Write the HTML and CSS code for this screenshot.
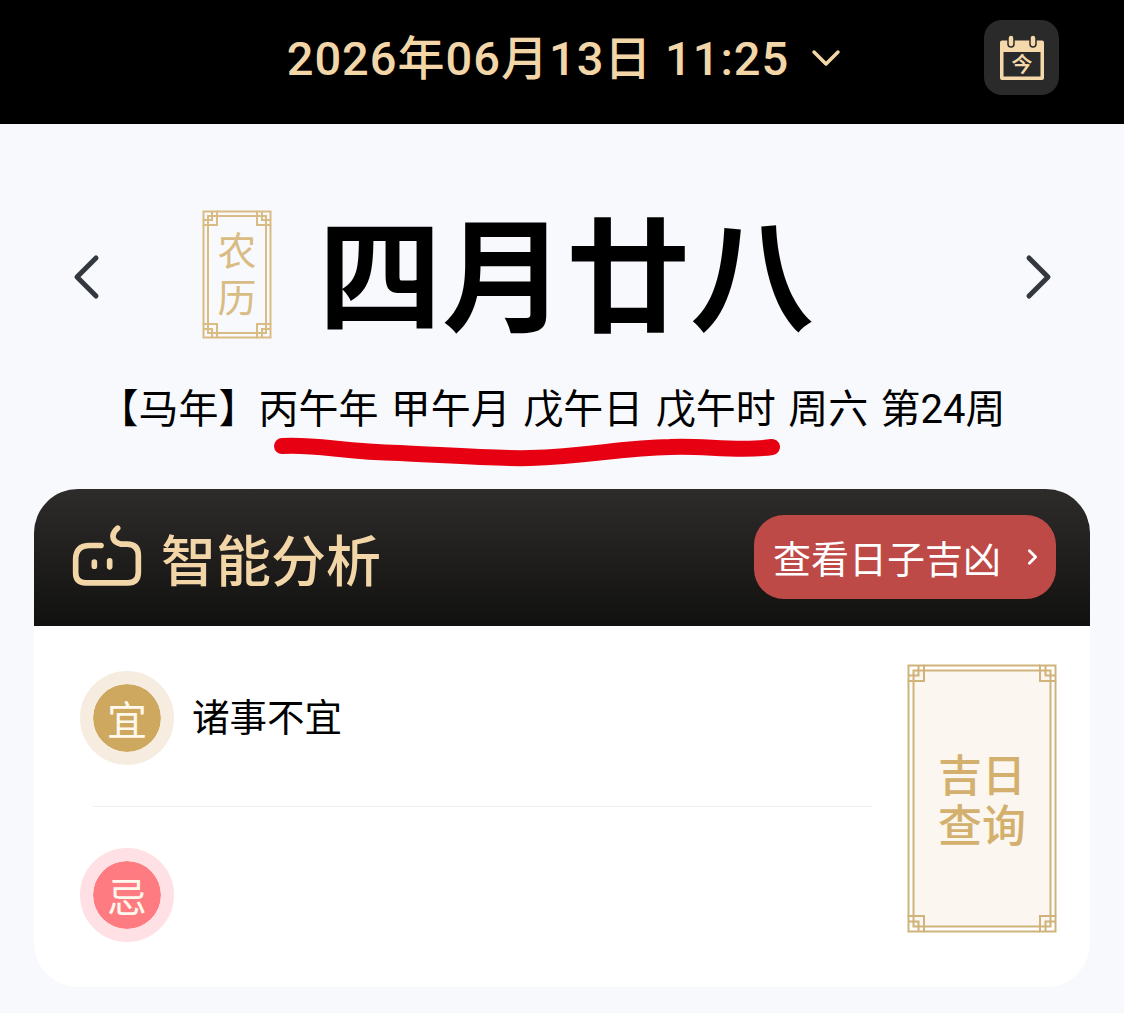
FILE: index.html
```html
<!DOCTYPE html>
<html lang="zh-CN">
<head>
  <meta charset="UTF-8">
  <title>智能分析</title>
  <link rel="stylesheet" href="styles.css">
</head>
<body>
<svg class="defs" width="0" height="0">
  <defs>
    <g id="knot-big">
      <rect x="1.500" y="1.500" width="15.500" height="15.500"/>
      <path d="M1.500 11.500H11.500V1.500"/>
      <path d="M6.500 17V6.500H17"/>
    </g>
    <g id="knot-small">
      <rect x="1.500" y="1.500" width="13.500" height="13.500"/>
      <path d="M1.500 10H10V1.500"/>
      <path d="M6 15V6H15"/>
    </g>
  </defs>
</svg>

<header class="top-bar">
  <div></div>
  <div class="date-picker">
    <span class="date-text">2026年06月13日 11:25</span>
    <svg class="date-chevron" viewBox="0 0 30 18"><path d="M3 3L15 15L27 3"/></svg>
  </div>
  <div class="today-wrap">
    <button class="today-btn">
      <svg width="46" height="46" viewBox="0 0 46 46">
        <path class="cal-fill" d="M3 5.500h40a2 2 0 0 1 2 2V43a2 2 0 0 1-2 2H3a2 2 0 0 1-2-2V7.500a2 2 0 0 1 2-2zM4.500 17V41.500H41.500V17z"/>
        <rect class="cal-ring" x="9" y="0" width="6" height="12" rx="3"/>
        <rect class="cal-ring" x="31" y="0" width="6" height="12" rx="3"/>
        <text class="cal-text" x="23" y="37" text-anchor="middle">今</text>
      </svg>
    </button>
  </div>
</header>

<main class="hero">
  <div class="hero-row">
    <svg class="arrow" viewBox="0 0 30 46"><path d="M24 4L5 23L24 42"/></svg>
    <div class="lunar-tag">
      <svg class="frame" width="70" height="129" viewBox="0 0 70 129">
        <use href="#knot-small"/>
        <use href="#knot-small" transform="translate(70 0) scale(-1 1)"/>
        <use href="#knot-small" transform="translate(0 129) scale(1 -1)"/>
        <use href="#knot-small" transform="translate(70 129) scale(-1 -1)"/>
        <path d="M15 1.500H55M15 6H55M15 127.500H55M15 123H55M1.500 15V114M6 15V114M68.500 15V114M64 15V114"/>
      </svg>
      <span>农<br>历</span>
    </div>
    <h1 class="lunar-date">四月廿八</h1>
    <svg class="arrow arrow-next" viewBox="0 0 30 46"><path d="M5 4L24 23L5 42"/></svg>
  </div>

  <div class="ganzhi">
    <p>【马年】丙午年 甲午月 戊午日 戊午时 周六 第24周</p>
    <svg class="scribble" width="520" height="40" viewBox="0 0 520 40">
      <path d="M12 13C50 11 70 19 130 20C190 23 230 26 260 25C320 23 350 15 400 14C430 12 470 19 502 14"/>
    </svg>
  </div>

  <section class="card">
    <div class="card-head">
      <svg class="robot" width="70" height="62" viewBox="125 115 210 185">
        <path d="M212 176H178Q136 176 136 218V258Q136 288 166 288H292Q324 288 324 256V206Q324 172 290 172H272Q246 166 248 146Q250 134 262 124"/>
        <path d="M192 226V238M238 222V240"/>
      </svg>
      <h2>智能分析</h2>
      <a class="lucky-btn">查看日子吉凶<svg width="14" height="22" viewBox="0 0 14 22"><path d="M3 3L11 11L3 19"/></svg></a>
    </div>
    <div class="card-body">
      <div class="advice">
        <div class="advice-row">
          <span class="badge badge-yi">宜</span>
          <span class="advice-text">诸事不宜</span>
        </div>
        <hr class="divider">
        <div class="advice-row">
          <span class="badge badge-ji">忌</span>
        </div>
      </div>
      <div class="lucky-tag">
        <svg class="frame" width="150" height="269" viewBox="0 0 150 269">
          <use href="#knot-big"/>
          <use href="#knot-big" transform="translate(150 0) scale(-1 1)"/>
          <use href="#knot-big" transform="translate(0 269) scale(1 -1)"/>
          <use href="#knot-big" transform="translate(150 269) scale(-1 -1)"/>
          <path d="M17 1.500H133M17 6.500H133M17 267.500H133M17 262.500H133M1.500 17V252M6.500 17V252M148.500 17V252M143.500 17V252"/>
        </svg>
        <span>吉日<br>查询</span>
      </div>
    </div>
  </section>
</main>
</body>
</html>
```

FILE: styles.css
```css
* {
  box-sizing: border-box;
}

body {
  margin: 0;
  background-color: #F8F9FC;
  font-family: "Roboto", "Noto Sans CJK SC", sans-serif;
  color: #000;
}

.defs {
  position: absolute;
}

.top-bar {
  height: 124px;
  background-color: #000;
  display: grid;
  grid-template-columns: 1fr auto 1fr;
  align-items: center;
  padding-bottom: 9px;
}

.date-picker {
  display: flex;
  align-items: center;
  gap: 22px;
  margin-left: 4px;
}

.date-text {
  font-size: 47px;
  font-weight: 500;
  letter-spacing: 1px;
  color: #F3D6A8;
  white-space: nowrap;
  margin-top: -6px;
}

.date-chevron {
  width: 30px;
  height: 18px;
  fill: none;
  stroke: #F3D6A8;
  stroke-width: 3.500;
  stroke-linecap: round;
  stroke-linejoin: round;
}

.today-wrap {
  display: flex;
  justify-content: flex-end;
  padding-right: 65px;
}

.today-btn {
  width: 75px;
  height: 75px;
  border: none;
  padding: 0;
  border-radius: 18px;
  background-color: #2A2A2A;
  display: flex;
  align-items: center;
  justify-content: center;
}

.cal-fill {
  fill: #F5D9AB;
  fill-rule: evenodd;
}

.cal-ring {
  fill: #F5D9AB;
  stroke: #2A2A2A;
  stroke-width: 1.500;
}

.cal-text {
  font-size: 20px;
  font-weight: 700;
  fill: #F5D9AB;
}

.hero-row {
  height: 200px;
  margin-top: 53px;
  padding: 0 70px 0 72px;
  display: flex;
  align-items: center;
}

.arrow {
  width: 30px;
  height: 46px;
  flex: none;
  fill: none;
  stroke: #33373E;
  stroke-width: 5;
  stroke-linecap: round;
  stroke-linejoin: round;
}

.arrow-next {
  margin-left: auto;
}

.lunar-tag {
  position: relative;
  width: 70px;
  height: 129px;
  margin-left: 100px;
  margin-top: -5px;
  padding-top: 2px;
  display: flex;
  align-items: center;
  justify-content: center;
  text-align: center;
  font-size: 39px;
  line-height: 47px;
  color: #D9BC84;
}

.frame {
  position: absolute;
  left: 0;
  top: 0;
  fill: none;
  stroke: #D9BC84;
  stroke-width: 2;
}

.lunar-date {
  margin: 6px 0 0 46px;
  font-size: 124px;
  line-height: 1;
  font-weight: 700;
  white-space: nowrap;
}

.ganzhi {
  position: relative;
  height: 64px;
  display: flex;
  align-items: center;
  justify-content: center;
}

.ganzhi p {
  margin: 2px 0 0 -20px;
  font-size: 40px;
  word-spacing: 2.500px;
  line-height: 64px;
  white-space: nowrap;
}

.scribble {
  position: absolute;
  left: 270px;
  top: 56px;
  fill: none;
  stroke: #E60012;
  stroke-width: 16;
  stroke-linecap: round;
}

.card {
  margin: 48px 34px 0;
  border-radius: 44px;
  overflow: hidden;
  background-color: #fff;
}

.card-head {
  height: 137px;
  padding: 0 34px 2px 38px;
  display: flex;
  align-items: center;
  background: linear-gradient(#2E2C2A, #111110);
}

.robot {
  fill: none;
  stroke: #F3D6A8;
  stroke-width: 17;
  stroke-linecap: round;
  stroke-linejoin: round;
  margin-top: -2px;
}

.card-head h2 {
  margin: 0 0 0 19px;
  font-size: 55px;
  font-weight: 500;
  color: #F3D6A8;
}

.lucky-btn {
  margin-left: auto;
  width: 302px;
  height: 84px;
  border-radius: 30px;
  background-color: #BE4A48;
  padding-left: 19px;
  display: flex;
  align-items: center;
  gap: 26px;
  font-size: 38px;
  color: #fff;
  white-space: nowrap;
}

.lucky-btn svg {
  width: 11px;
  height: 18px;
  fill: none;
  stroke: #fff;
  stroke-width: 3.500;
  stroke-linecap: round;
  stroke-linejoin: round;
}

.card-body {
  height: 361px;
  display: flex;
  padding: 38px 33px 0 46px;
}

.advice {
  flex: 1;
  padding-top: 7px;
}

.advice-row {
  display: flex;
  align-items: center;
  height: 94px;
  gap: 18px;
}

.advice-text {
  font-size: 37.500px;
  margin-top: -8px;
}

.badge {
  width: 94px;
  height: 94px;
  border-radius: 50%;
  border: 13px solid;
  background-clip: padding-box;
  display: flex;
  align-items: center;
  justify-content: center;
  font-size: 40px;
  color: #FFF8EC;
}

.badge-yi {
  background-color: #CFA85F;
  border-color: #F6EDE0;
}

.badge-ji {
  background-color: #FF7B82;
  border-color: #FFE0E4;
}

.divider {
  height: 1px;
  margin: 41px 0 41px 13px;
  width: 779px;
  border: none;
  background-color: #F0F0F0;
}

.lucky-tag {
  position: relative;
  width: 150px;
  height: 269px;
  flex: none;
  display: flex;
  align-items: center;
  justify-content: center;
  text-align: center;
  font-size: 44px;
  line-height: 50px;
  color: #D4B06F;
  background: linear-gradient(#FBF7F0, #FBF7F0) center / 138px 257px no-repeat;
}

.lucky-tag span {
  font-weight: 500;
  margin-top: 7px;
}

.lucky-tag .frame {
  stroke: #CFB37A;
  stroke-width: 2;
}
```
